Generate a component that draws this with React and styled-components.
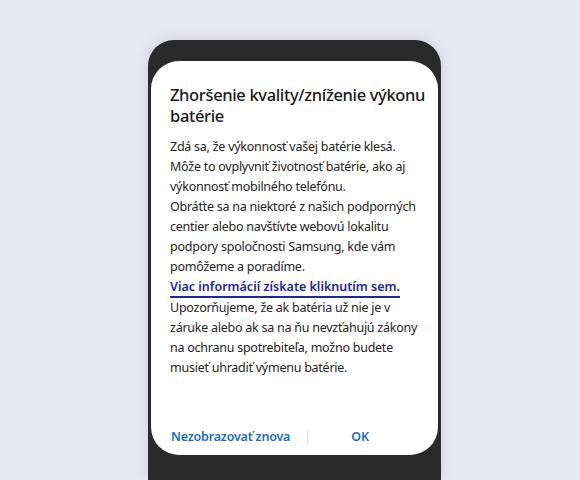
import React from 'react'
import styled, { createGlobalStyle } from 'styled-components'

const GlobalStyle = createGlobalStyle`
  html, body {
    margin: 0;
    padding: 0;
    background: #e9e9f3;
    font-family: "Noto Sans", "Open Sans", sans-serif;
    overflow: hidden;
  }
`

const Page = styled.div`
  width: 580px;
  height: 480px;
  padding: 40px 0 0 148px;
  box-sizing: border-box;
`

const Phone = styled.div`
  width: 293px;
  height: 440px;
  box-sizing: border-box;
  padding: 21px 3px 0 3px;
  background: #2a2a2a;
  border-radius: 26px 26px 0 0;
  box-shadow: 0 0 14px rgba(120, 120, 160, 0.25);
`

const Dialog = styled.div`
  height: 394px;
  box-sizing: border-box;
  background: #fff;
  border-radius: 28px;
  padding: 23px 20px 0 19px;
  display: flex;
  flex-direction: column;
`

const Title = styled.h1`
  margin: 0;
  font-size: 16.5px;
  line-height: 21px;
  letter-spacing: -0.35px;
  font-weight: 500;
  color: #1a1a1a;
  white-space: nowrap;
`

const Body = styled.div`
  margin-top: 11px;
  font-size: 12.5px;
  line-height: 20px;
  letter-spacing: -0.25px;
  color: #252525;
`

const Line = styled.div`
  white-space: nowrap;
`

const Link = styled.a`
  display: inline-block;
  color: #2225a3;
  font-weight: 600;
  letter-spacing: 0;
  text-decoration: none;
  line-height: 19px;
  border-bottom: 2px solid #2225a3;
`

const Actions = styled.div`
  margin-top: auto;
  margin-bottom: 8px;
  display: flex;
  align-items: center;
  padding-right: 6px;
`

const Action = styled.button`
  border: 0;
  background: none;
  padding: 0;
  font-family: inherit;
  font-size: 12.5px;
  letter-spacing: -0.2px;
  font-weight: 600;
  color: #1b6cc2;
  line-height: 20px;
  flex: ${p => (p.$grow ? 1 : 'none')};
  text-align: ${p => (p.$grow ? 'center' : 'left')};
  padding-left: ${p => (p.$grow ? 0 : '1px')};
`

const Divider = styled.span`
  width: 1px;
  height: 14px;
  background: #e2e2e2;
  margin: 0 0 0 17px;
`

const intro = [
  'Zdá sa, že výkonnosť vašej batérie klesá.',
  'Môže to ovplyvniť životnosť batérie, ako aj',
  'výkonnosť mobilného telefónu.',
  'Obráťte sa na niektoré z našich podporných',
  'centier alebo navštívte webovú lokalitu',
  'podpory spoločnosti Samsung, kde vám',
  'pomôžeme a poradíme.',
]

const warning = [
  'Upozorňujeme, že ak batéria už nie je v',
  'záruke alebo ak sa na ňu nevzťahujú zákony',
  'na ochranu spotrebiteľa, možno budete',
  'musieť uhradiť výmenu batérie.',
]

export default function App() {
  return (
    <>
      <GlobalStyle />
      <Page>
        <Phone>
          <Dialog>
            <Title>
              Zhoršenie kvality/zníženie výkonu
              <br />
              batérie
            </Title>
            <Body>
              {intro.map(t => (
                <Line key={t}>{t}</Line>
              ))}
              <Line>
                <Link href="#">Viac informácií získate kliknutím sem.</Link>
              </Line>
              {warning.map(t => (
                <Line key={t}>{t}</Line>
              ))}
            </Body>
            <Actions>
              <Action>Nezobrazovať znova</Action>
              <Divider />
              <Action $grow>OK</Action>
            </Actions>
          </Dialog>
        </Phone>
      </Page>
    </>
  )
}
